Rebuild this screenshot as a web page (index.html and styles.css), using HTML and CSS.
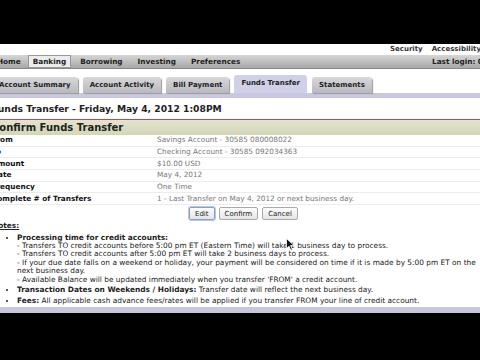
FILE: index.html
```html
<!DOCTYPE html>
<html lang="en">
<head>
  <meta charset="UTF-8">
  <meta name="viewport" content="width=device-width, initial-scale=1.0">
  <title>Funds Transfer</title>
  <link rel="stylesheet" href="styles.css">
</head>
<body>

<div class="page">
  <div class="toplinks">
    <span>Security</span>
    <span>Accessibility</span>
  </div>

  <div class="nav">
    <div class="nav-left">
      <span class="nav-item">Home</span>
      <span class="nav-item active">Banking</span>
      <span class="nav-item">Borrowing</span>
      <span class="nav-item">Investing</span>
      <span class="nav-item">Preferences</span>
    </div>
    <span class="last-login">Last login: 05/04/2012</span>
  </div>

  <div class="tabs">
    <span class="tab">Account Summary</span>
    <span class="tab">Account Activity</span>
    <span class="tab">Bill Payment</span>
    <span class="tab active">Funds Transfer</span>
    <span class="tab">Statements</span>
  </div>
  <div class="tab-bar"></div>

  <h1>Funds Transfer - Friday, May 4, 2012 1:08PM</h1>

  <h2>Confirm Funds Transfer</h2>
  <table class="details">
    <tr><th>From</th><td>Savings Account - 30585 080008022</td></tr>
    <tr><th>To</th><td>Checking Account - 30585 092034363</td></tr>
    <tr><th>Amount</th><td>$10.00 USD</td></tr>
    <tr><th>Date</th><td>May 4, 2012</td></tr>
    <tr><th>Frequency</th><td>One Time</td></tr>
    <tr><th>Complete # of Transfers</th><td>1 - Last Transfer on May 4, 2012 or next business day.</td></tr>
  </table>

  <div class="buttons">
    <button class="focus">Edit</button>
    <button>Confirm</button>
    <button>Cancel</button>
  </div>

  <div class="notes">
    <p class="notes-title">Notes:</p>
    <ul>
      <li>
        <b>Processing time for credit accounts:</b><br>
        - Transfers TO credit accounts before 5:00 pm ET (Eastern Time) will take 1 business day to process.<br>
        - Transfers TO credit accounts after 5:00 pm ET will take 2 business days to process.<br>
        - If your due date falls on a weekend or holiday, your payment will be considered on time if it is made by 5:00 pm ET on the next business day.<br>
        - Available Balance will be updated immediately when you transfer 'FROM' a credit account.
      </li>
      <li><b>Transaction Dates on Weekends / Holidays:</b> Transfer date will reflect the next business day.</li>
      <li><b>Fees:</b> All applicable cash advance fees/rates will be applied if you transfer FROM your line of credit account.</li>
    </ul>
  </div>

  <div class="footer-bar"></div>

  <svg class="cursor" width="9" height="13" viewBox="0 0 9 13">
    <path d="M0.5 0.5 L0.5 10.5 L3 8.2 L4.8 12.3 L6.3 11.6 L4.6 7.6 L8 7.6 Z" fill="#111" stroke="#fff" stroke-width="0.8"/>
  </svg>
</div>

</body>
</html>
```

FILE: styles.css
```css
body {
  margin: 0;
  padding: 44px 0 0 0;
  background-color: #000;
  overflow: hidden;
  height: 360px;
  box-sizing: border-box;
  font-family: "DejaVu Sans", Verdana, sans-serif;
}
.page {
  position: relative;
  margin-left: -8px;
  width: 496px;
  height: 269px;
  background-color: #fff;
  overflow: hidden;
  color: #222;
}
.toplinks {
  height: 11px;
  display: flex;
  gap: 9px;
  padding-left: 398px;
  font-size: 7px;
  font-weight: bold;
  color: #333;
  line-height: 11px;
  white-space: nowrap;
}
.nav {
  height: 14px;
  display: flex;
  align-items: center;
  background: linear-gradient(#d6d6d6, #a8a8a8);
  border-bottom: 1px solid #888;
  font-size: 7.3px;
  font-weight: bold;
  color: #222;
  white-space: nowrap;
  box-sizing: border-box;
}
.nav-left {
  width: 440px;
  display: flex;
  align-items: center;
  flex-shrink: 0;
}
.nav-item {
  padding: 1px 4px;
  margin-right: 5px;
  border: 1px solid transparent;
}
.nav-item:first-child {
  margin-right: 2px;
}
.nav-item.active {
  background-color: #ececec;
  border-color: #999;
  margin-right: 4px;
}
.last-login {
  flex-shrink: 0;
}
.tabs {
  margin-top: 6px;
  display: flex;
  gap: 5px;
  align-items: flex-end;
  height: 18px;
}
.tab {
  height: 16px;
  line-height: 16px;
  padding: 0 7px;
  font-size: 7px;
  font-weight: bold;
  color: #222;
  background: linear-gradient(#d8d8dc, #b8b8be);
  border-radius: 3px 3px 0 0;
  box-shadow: 1px 1px 1px #999;
  white-space: nowrap;
}
.tab.active {
  height: 18px;
  background: #d0d0e8;
  box-shadow: none;
}
.tab-bar {
  height: 5px;
  background-color: #c8c8e0;
}
h1 {
  margin: 5px 0 0 0;
  font-size: 9.2px;
  line-height: 11px;
  color: #222;
}
h2 {
  margin: 5px 0 0 0;
  border-top: 1px solid #c04848;
  background: linear-gradient(#e4e4d0, #d2d6b6);
  font-size: 10px;
  line-height: 15px;
  height: 15px;
  color: #222;
}
.details {
  width: 100%;
  border-collapse: collapse;
  font-size: 7.3px;
}
.details th,
.details td {
  height: 10.7px;
  line-height: 10px;
  padding: 0;
  border-bottom: 1px solid #ececec;
  text-align: left;
}
.details th {
  width: 165px;
  font-weight: bold;
  color: #111;
}
.details td {
  color: #777;
}
.buttons {
  display: flex;
  gap: 4px;
  padding-left: 197px;
  margin-top: 2px;
}
button {
  font-family: "DejaVu Sans", Verdana, sans-serif;
  font-size: 7px;
  height: 13px;
  padding: 0 5px;
  border: 1px solid #aaa;
  border-radius: 2px;
  background: linear-gradient(#fdfdfd, #e4e4e4);
  color: #222;
}
button.focus {
  border-color: #8aa0c8;
  box-shadow: 0 0 0 1px #b8c8e4;
}
.notes {
  font-size: 7.4px;
  line-height: 8.4px;
  color: #222;
}
.notes-title {
  margin: 2px 0 0 0;
  font-weight: bold;
  text-decoration: underline;
}
.notes ul {
  margin: 3px 0 0 0;
  padding-left: 25px;
}
.notes li {
  margin-bottom: 2.5px;
}
.footer-bar {
  position: absolute;
  left: 0;
  right: 0;
  bottom: 0;
  height: 6px;
  background-color: #c8c8dc;
}
.cursor {
  position: absolute;
  left: 294px;
  top: 194px;
}
```
